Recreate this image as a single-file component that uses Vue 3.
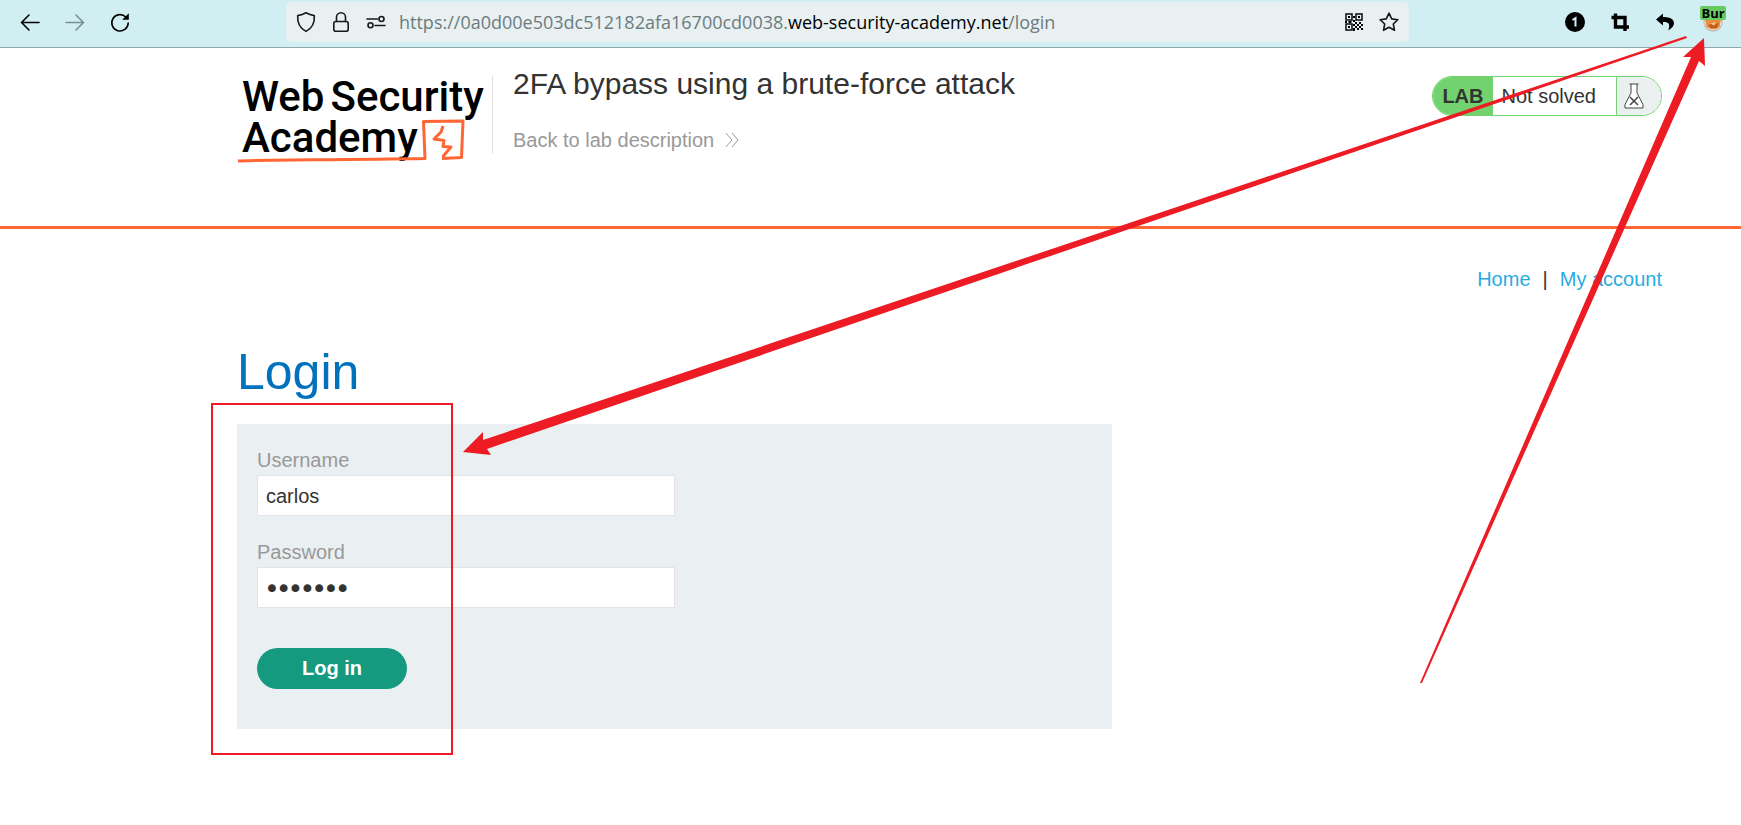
<script setup>
import { ref } from 'vue'

const username = ref('carlos')
const password = ref('montoya')
</script>

<template>
  <div class="page">
    <div class="toolbar">
      <div class="nav-buttons">
        <button type="button" aria-label="Back">
          <svg viewBox="0 0 20 20"><path d="M19 10.500H2M9 3 1.500 10.500 9 18" class="line" /></svg>
        </button>
        <button type="button" aria-label="Forward" class="dim">
          <svg viewBox="0 0 20 20"><path d="M1 10.500h17M11 3l7.500 7.500L11 18" class="line" /></svg>
        </button>
        <button type="button" aria-label="Reload">
          <svg viewBox="0 0 20 20">
            <path d="M16 5.200A8.200 8.200 0 1 0 18.200 11" class="line" />
            <path d="M18.800 1.200v6.600h-6.600z" />
          </svg>
        </button>
      </div>
      <div class="address">
        <div class="icon-group">
          <svg viewBox="0 0 20 20"><path d="M10 .8c2.600 1.600 5.200 2.400 8.300 2.800.5 7.200-2.200 12.700-8.300 15.800C3.900 16.300 1.200 10.800 1.700 3.600 4.800 3.200 7.400 2.400 10 .8z" class="line soft" /></svg>
          <svg viewBox="0 0 20 20"><rect x="2.800" y="9.500" width="14.400" height="9.700" rx="2" class="line soft" /><path d="M5.500 9.500V5.300a4.500 4.500 0 0 1 9 0v4.200" class="line soft" /></svg>
          <svg viewBox="0 0 20 20"><path d="M1 7h10.500M9 13.500h10" class="line soft" /><circle cx="15.500" cy="7" r="2.500" class="line soft" /><circle cx="4.500" cy="13.200" r="2.500" class="line soft" /></svg>
        </div>
        <span class="url">https://0a0d00e503dc512182afa16700cd0038.<b>web-security-academy.net</b>/login</span>
        <div class="icon-group">
          <button type="button" aria-label="QR code">
            <svg viewBox="0 0 20 20">
              <g class="qr">
                <rect x="2" y="2" width="6" height="6" /><rect x="12" y="2" width="6" height="6" /><rect x="2" y="12" width="6" height="6" />
              </g>
              <path d="M4 4h2v2H4zM14 4h2v2h-2zM4 14h2v2H4zM9 4h2v2H9zM9 8h2v2H9zM1 9h2v2H1zM4.500 9h3v2h-3zM11 10h2v2h-2zM15 10h2v2h-2zM9 12h2v2H9zM13 12h2v2h-2zM17 12h2v2h-2zM11 14h2v2h-2zM15 14h2v2h-2zM9 16h2v3H9zM13 16h2v2h-2zM17 16h2v2h-2z" />
            </svg>
          </button>
          <button type="button" aria-label="Bookmark">
            <svg viewBox="0 0 20 20"><path d="m10 1.200 2.700 5.700 6.200.8-4.600 4.300 1.200 6.300L10 15.200l-5.500 3.100L5.700 12 1.100 7.700l6.200-.8z" class="line soft" /></svg>
          </button>
        </div>
      </div>
      <div class="extensions">
        <button type="button" aria-label="Containers">
          <svg viewBox="0 0 20 20"><circle cx="10" cy="10" r="10" /><path d="M7.500 8 10.500 6v8.500" class="one" /></svg>
        </button>
        <button type="button" aria-label="Crop">
          <svg viewBox="0 0 20 20"><path d="M1.500 5.500H15V19M5.500 1.500V15H19" class="crop" /></svg>
        </button>
        <button type="button" aria-label="Undo">
          <svg viewBox="0 0 20 20"><path d="M8 1.500 1 7.500 8 13.500V10c5.500-.3 7.700 1.700 5.300 8.400 3.300-2.200 5.700-4.200 5.700-7.200 0-4.300-4.500-6.100-11-6.200z" /></svg>
        </button>
        <button type="button" class="burp">
          <svg viewBox="0 0 20 20"><circle cx="10" cy="10" r="9" fill="#fff" stroke="#c6beb5" stroke-width="1.500" /><path d="M2 8h16l-1.500 7-4 2.500H8L3.500 15z" fill="#ee8a3a" /><path d="m5 13 4-1 2 2 5-4-2 6H8z" fill="#b85e22" /><path d="m4 10 4 2 4-2-1 3z" fill="#ffe0bb" /></svg>
          <span>Bur</span>
        </button>
      </div>
    </div>

    <header class="lab-header">
      <a href="#" class="logo">
        <span class="logo-line"><span>Web</span><span>Security</span></span>
        <span class="logo-line">Academy</span>
        <svg class="logo-mark" viewBox="0 0 240 50">
          <path d="M1 42C10 40.800 100 41 188 39.500L186.500 2.500 226 2 224.500 38.500 205 39.500" />
          <path d="M206 7 204 13 197 20 207 21.500 206 27.500 214 28 205.500 38" />
        </svg>
      </a>
      <div class="title">
        <h2>2FA bypass using a brute-force attack</h2>
        <a href="#" class="back">Back to lab description
          <svg viewBox="0 0 14 16"><path d="m1 1 6 7-6 7M7 1l6 7-6 7" /></svg>
        </a>
      </div>
      <div class="status">
        <span class="tag">LAB</span>
        <span class="state">Not solved</span>
        <span class="flask">
          <svg viewBox="0 0 20 26"><path d="M5.500 1h9M7 1v9L1 21.500V25h18v-3.500L13 10V1" /><path d="m6 14 8 8M14 14l-8 8" class="cross" /></svg>
        </span>
      </div>
    </header>

    <main>
      <nav><a href="#">Home</a><span>|</span><a href="#">My account</a></nav>
      <h1>Login</h1>
      <form @submit.prevent>
        <label for="username">Username</label>
        <input id="username" v-model="username" type="text" autocomplete="off">
        <label for="password">Password</label>
        <input id="password" v-model="password" type="password" autocomplete="off">
        <button type="submit">Log in</button>
      </form>
    </main>

    <svg class="annotations" aria-hidden="true">
      <rect x="212" y="404" width="240" height="350" />
      <path d="M1686 36 483 440V432L463 452 491 455 487 449 1687 38Z" />
      <path d="M1420 683 1691 57 1683 57 1704 38 1705 66 1699 61 1422 683Z" />
    </svg>
  </div>
</template>

<style>
body {
  margin: 0;
  background: #fff;
}
</style>

<style scoped>
.page {
  position: relative;
  box-sizing: border-box;
  min-height: 100vh;
  font: 20px/24px "Liberation Sans", Arial, sans-serif;
  color: #333332;
}
a {
  text-decoration: none;
}
button {
  padding: 0;
  border: 0;
  background: none;
  font: inherit;
  color: inherit;
}

.toolbar {
  display: flex;
  box-sizing: border-box;
  height: 48px;
  padding: 2px 15px 5px 20px;
  border-bottom: 1px solid #93a6ab;
  background: #d1eff3;
}
.toolbar svg {
  display: block;
  flex: none;
  width: 20px;
  height: 20px;
  overflow: visible;
}
.toolbar .line {
  fill: none;
  stroke: #000;
  stroke-width: 1.6;
  stroke-linecap: round;
  stroke-linejoin: round;
}
.toolbar .soft {
  stroke: #15191a;
}
.nav-buttons,
.extensions {
  display: flex;
  align-items: center;
  gap: 25px;
}
.nav-buttons {
  margin-right: 156px;
}
.extensions {
  margin-left: 156px;
}
.dim {
  opacity: 0.4;
}
.address {
  display: flex;
  flex: 1;
  align-items: center;
  min-width: 0;
  padding: 0 10px;
  border-radius: 5px;
  background: #e8f0f2;
  gap: 13px;
}
.icon-group {
  display: flex;
  gap: 15px;
}
.url {
  flex: 1;
  min-width: 0;
  overflow: hidden;
  font: 18px/24px "Open Sans", "Noto Sans", sans-serif;
  white-space: nowrap;
  color: #6c7c7e;
}
.url b {
  font-weight: 400;
  color: #000;
}
.qr rect {
  fill: none;
  stroke: #15191a;
  stroke-width: 1.6;
}
.one {
  fill: none;
  stroke: #d1eff3;
  stroke-width: 2;
}
.crop {
  fill: none;
  stroke: #000;
  stroke-width: 3.4;
}
.burp {
  position: relative;
  width: 26px;
}
.burp svg {
  margin: 0 auto;
}
.burp span {
  position: absolute;
  top: -6px;
  left: 0;
  width: 26px;
  border-radius: 2px;
  background: #68cb62;
  font: 700 13px/14px "Open Sans", sans-serif;
  color: #000;
}

.lab-header {
  display: flex;
  align-items: flex-start;
  box-sizing: border-box;
  height: 181px;
  padding: 28px 79px 0 237px;
  border-bottom: 3px solid #ff6633;
}
.logo {
  position: relative;
  box-sizing: border-box;
  width: 256px;
  height: 78px;
  padding-left: 5px;
  border-right: 1px solid #dfdfdf;
  color: #000;
}
.logo-line {
  display: flex;
  gap: 6px;
  font: 500 42px/41px Roboto, sans-serif;
}
.logo-mark {
  position: absolute;
  top: 43px;
  left: 0;
  width: 240px;
  height: 50px;
}
.logo-mark path {
  fill: none;
  stroke: #ff6633;
  stroke-width: 3;
  stroke-linejoin: round;
}
.title {
  flex: 1;
  padding-left: 20px;
}
h2 {
  margin: 0;
  font-size: 30px;
  font-weight: 400;
  line-height: 16px;
}
.back {
  display: inline-flex;
  align-items: center;
  margin-top: 36px;
  gap: 11px;
  color: #999;
}
.back svg {
  width: 14px;
  height: 16px;
}
.back path {
  fill: none;
  stroke: #999;
}
.status {
  display: flex;
  box-sizing: border-box;
  height: 40px;
  overflow: hidden;
  border: 1px solid #72d36e;
  border-radius: 20px;
  line-height: 39px;
}
.tag {
  padding: 0 9px;
  background: #72d36e;
  font-weight: 700;
}
.state {
  padding: 0 20px 0 9px;
}
.flask {
  display: flex;
  align-items: center;
  padding: 0 17px 0 7px;
  border-left: 1px solid #72d36e;
  background: #eaeff0;
}
.flask svg {
  width: 20px;
  height: 26px;
}
.flask path {
  fill: #fff;
  stroke: #444;
}
.flask .cross {
  stroke-width: 1.5;
}

main {
  padding: 38px 79px 40px 237px;
}
nav {
  display: flex;
  justify-content: flex-end;
  gap: 12px;
}
nav a {
  color: #29abe2;
}
h1 {
  margin: 58px 0 29px;
  font-size: 50px;
  font-weight: 400;
  line-height: 46px;
  color: #0071bc;
}
form {
  box-sizing: border-box;
  max-width: 875px;
  padding: 23px 20px 40px;
  background: #eaeff1;
}
label {
  display: block;
  margin-bottom: 2px;
  line-height: 26px;
  color: #999;
}
input {
  display: block;
  box-sizing: border-box;
  width: 50%;
  height: 41px;
  margin: 0 0 23px;
  padding: 1px 8px 0;
  border: 1px solid #e3e3e5;
  border-radius: 0;
  outline: 0;
  background: #fff;
  font: inherit;
  color: #333332;
}
input[type="password"] {
  margin-bottom: 40px;
  font-family: "DejaVu Sans", sans-serif;
  -webkit-text-stroke: 2px #333332;
}
form button {
  display: block;
  width: 150px;
  height: 41px;
  padding-bottom: 2px;
  border-radius: 21px;
  background: #159a80;
  font-weight: 700;
  color: #fff;
}

.annotations {
  position: absolute;
  inset: 0;
  width: 100%;
  height: 100%;
  pointer-events: none;
}
.annotations rect {
  fill: none;
  stroke: #ed1c24;
  stroke-width: 2;
}
.annotations path {
  fill: #ed1c24;
}
</style>
